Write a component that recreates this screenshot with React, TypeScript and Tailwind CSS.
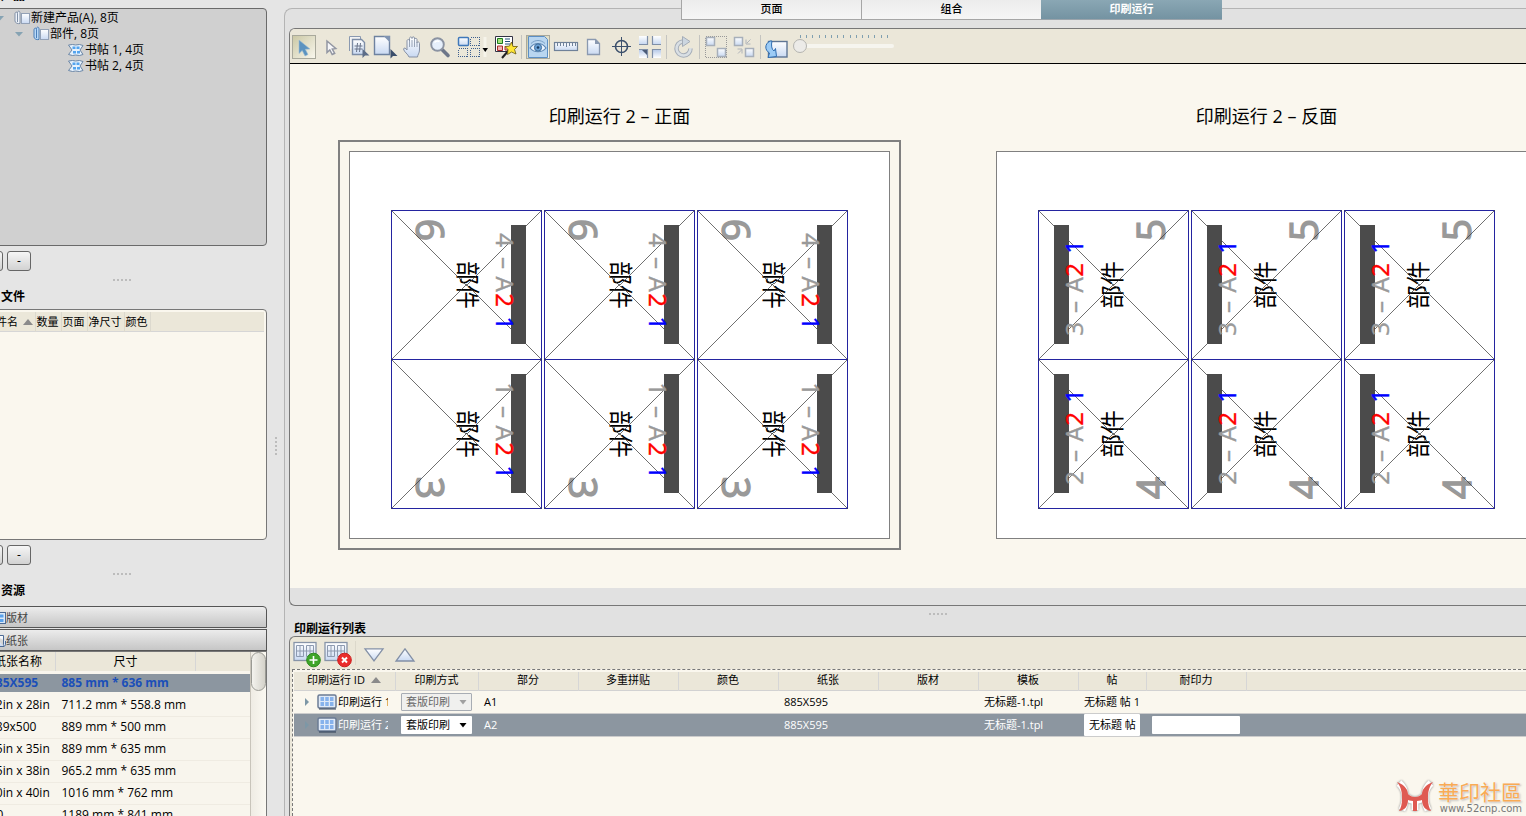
import { useState } from "react"
import type { ReactNode } from "react"

// Shared gradients for the toolbar icons
function IconDefs() {
  return (
    <svg width="0" height="0" className="absolute" aria-hidden="true">
      <defs>
        <linearGradient id="paper" x1="0" y1="0" x2="0" y2="1">
          <stop offset="0" stopColor="#ffffff" />
          <stop offset="1" stopColor="#c9d9f2" />
        </linearGradient>
        <linearGradient id="paperDown" x1="0" y1="0" x2="0" y2="1">
          <stop offset="0" stopColor="#b9cbe9" />
          <stop offset="1" stopColor="#ffffff" />
        </linearGradient>
      </defs>
    </svg>
  )
}

function Icon({ w = 24, h = 24, children }: { w?: number; h?: number; children: ReactNode }) {
  return (
    <svg width={w} height={h} viewBox={`0 0 ${w} ${h}`} fill="none" aria-hidden="true" className="block shrink-0 overflow-visible">
      {children}
    </svg>
  )
}

const ArrowIcon = () => (
  <Icon>
    <path d="M7 5v13.500l3.200-3 2.800 5.500 3-1.500-2.700-5.200 4.700-.3z" fill="#5b93c0" stroke="#9dbdd4" strokeWidth=".6" />
  </Icon>
)

const SmallArrowIcon = () => (
  <Icon>
    <path d="M8 6v11.500l2.800-2.500 2.400 4.500 2.500-1.200-2.400-4.300 3.500-.5z" fill="#f6f6f8" stroke="#9296a2" strokeWidth="1.500" />
  </Icon>
)

const NumberPagesIcon = () => (
  <Icon>
    <path d="M3.500 16V1.500h11V4" stroke="#8a99b0" fill="#f4f4f4" />
    <path d="M6.500 4.500h9l3 3v12h-12z" fill="url(#paper)" stroke="#7d8da6" strokeWidth="1.400" />
    <path d="M11.500 8l-1 9M14.500 8l-1 9M8.500 11h8M8.500 14h8" stroke="#6a758a" />
    <path d="M16.500 14v9l2.500-2.500h4.500z" fill="#5c6d88" />
  </Icon>
)

const PageArrowIcon = () => (
  <Icon>
    <path d="M1.500 1.500h15v18h-15z" fill="url(#paper)" stroke="#6e82a0" strokeWidth="1.400" />
    <path d="M10.500 1l6.500 6.500V1z" fill="#8094b2" />
    <path d="M17.500 14v9.500l2.500-2.500h4.500z" fill="#3a4e6b" />
  </Icon>
)

const HandIcon = () => (
  <Icon>
    <path
      d="M9 22c-1-3-5-5-5.500-8 .5-1.500 2-1.200 3.500 1V6c0-2 2.500-2 2.500 0V3.500c0-2 2.500-2 2.500 0V3c0-1.500 2.500-1.500 2.500 0v1.500c0-1.500 2.500-1.500 2.500 0V8c0-1.500 2.500-1.500 2.500.5V15c0 3-2 5-2 7z"
      fill="url(#paper)"
      stroke="#8791a4"
    />
    <path d="M9.500 6v6M12 5v7M14.500 5v7M17 7v5" stroke="#98a4b6" />
  </Icon>
)

const ZoomIcon = () => (
  <Icon>
    <path d="M15.500 15l5.500 5.500" stroke="#6d7689" strokeWidth="3.600" strokeLinecap="round" />
    <circle cx="10.500" cy="9.500" r="6.300" fill="#e6effb" stroke="#8b93a2" strokeWidth="1.900" />
    <path d="M7.500 7.500a4 4 0 0 1 5-1" stroke="#fff" strokeWidth="1.500" />
  </Icon>
)

const CellsIcon = () => (
  <Icon w={36}>
    <path
      d="M16.500 2.500h9v8h-9zM4.500 13.500h9v8h-9zM16.500 13.500h9v8h-9z"
      stroke="#3d5f8f"
      strokeDasharray="1 1"
      shapeRendering="crispEdges"
    />
    <rect x="4.500" y="2.500" width="10" height="8" rx="1" fill="url(#paper)" stroke="#3f78ba" strokeWidth="1.500" />
    <path d="M31 2v20" stroke="#f6f4ea" strokeWidth="3" />
    <path d="M28.500 13h5.500l-2.750 4z" fill="#000" />
  </Icon>
)

const WizardIcon = () => (
  <Icon>
    <path d="M2.500 1.500h17v15h-17z" fill="#fff" stroke="#334" />
    <path d="M4.500 3.500h5v5h-5z" fill="#a5e07c" stroke="#1c7a1c" />
    <path d="M12 4h5M12 6.500h5M12 9h5" stroke="#25527a" strokeWidth="1.200" />
    <path d="M4.500 11h5v4.500h-5zM12 11.500h4v3.500h-4z" fill="#f3b4b4" stroke="#a82a2a" />
    <path d="M9 23l7-8" stroke="#222" strokeWidth="2" />
    <path d="M18.500 7l1.500 4.500h4.500L21.500 14.500l1.500 4.500-4.500-2-4 2.500.5-5-3-3 4.500-.5z" fill="#ffe634" stroke="#6b5a10" strokeWidth=".8" />
  </Icon>
)

const EyeIcon = () => (
  <Icon>
    <path d="M2.500 1.500h16l3 3v18h-19z" fill="#b9d6f0" stroke="#5c8fc4" />
    <path d="M4 13c4-6 12-6 16 0-4 5-12 5-16 0z" fill="#eef6ff" stroke="#5f88b3" strokeWidth="1.200" />
    <circle cx="12" cy="12.500" r="3.600" fill="#6ba1d4" stroke="#3f6f9f" />
    <circle cx="12" cy="12.500" r="1.300" fill="#173a61" />
    <path d="M5 8.500c4-4 10-4 14 0" stroke="#7aa0c6" />
  </Icon>
)

const RulerIcon = () => (
  <Icon>
    <rect x=".5" y="7.500" width="23" height="8" fill="url(#paper)" stroke="#6f8199" strokeWidth="1.200" />
    <path d="M3.500 8v3M6.500 8v3M9.500 8v3M12.500 8v4M15.500 8v3M18.500 8v3M21.500 8v3" stroke="#6f8199" />
  </Icon>
)

const PageIcon = () => (
  <Icon>
    <path d="M5.500 4.500h8l4 4v11h-12z" fill="url(#paper)" stroke="#8a99b0" strokeWidth="1.300" />
    <path d="M13 4l5 5h-5z" fill="#8a99b0" />
  </Icon>
)

const TargetIcon = () => (
  <Icon>
    <circle cx="11.500" cy="11.500" r="6" stroke="#3c506c" strokeWidth="1.600" />
    <path d="M11.500 2v19M2 11.500h19" stroke="#3c506c" shapeRendering="crispEdges" />
  </Icon>
)

const CropMarksIcon = () => (
  <Icon>
    <path d="M1 1h8v8H1zM15 1h8v8h-8z" fill="url(#paper)" />
    <path d="M1 15h8v8H1zM15 15h8v8h-8z" fill="url(#paperDown)" />
    <path d="M1 9.500h8.500V1M14.500 1v8.500H23M1 14.500h8.500V23M14.500 23v-8.500H23" stroke="#7f8fa8" strokeWidth="1.200" />
    <path d="M4 15h5v5z" fill="#4b5c78" />
  </Icon>
)

const RotateIcon = () => (
  <Icon>
    <path d="M12 6.500a7 7 0 1 0 7.500 7" stroke="#a5adb8" strokeWidth="4.500" />
    <path d="M12 6.500a7 7 0 1 0 7.500 6.500" stroke="#d9dfe4" strokeWidth="2.500" />
    <path d="M11.500 1.500l7.500 5-7.500 5z" fill="#ccd6e0" stroke="#a5adb8" />
  </Icon>
)

const GroupIcon = () => (
  <Icon>
    <path d="M1.500 1.500h21v21h-21z" stroke="#999" strokeDasharray="1 1" shapeRendering="crispEdges" />
    <rect x="2.500" y="2.500" width="8" height="8" fill="url(#paper)" stroke="#a7afba" strokeWidth="1.500" />
    <rect x="13.500" y="13.500" width="8" height="8" fill="url(#paper)" stroke="#a7afba" strokeWidth="1.500" />
  </Icon>
)

const SwapIcon = () => (
  <Icon>
    <rect x="2.500" y="2.500" width="8" height="8" fill="url(#paper)" stroke="#a7afba" strokeWidth="1.500" />
    <rect x="13.500" y="13.500" width="8" height="8" fill="url(#paper)" stroke="#a7afba" strokeWidth="1.500" />
    <path d="M18.500 4.500l-3.500 3.500M14 4.500V9h4.500M6 18.500l3.500-3.500M10 18.500V14H5.500" stroke="#b0b4ba" />
  </Icon>
)

const FlipIcon = () => (
  <Icon>
    <rect x="3.500" y="6.500" width="18.500" height="15.500" fill="url(#paper)" stroke="#5f7594" strokeWidth="1.400" />
    <path d="M5 6c-5.500 3-5.500 9-.5 12l-1.500 4.500 8.500-1-1-8-1.500 2.500c-2.500-1.500-3-6-2-10z" fill="#9ccbf5" stroke="#2e6cb0" />
  </Icon>
)

const WorkIcon = () => (
  <Icon w={16} h={14}>
    <path d="M1 3c0-2.500 2.500-2.500 2.500 0v8M3.500 2c0-2.500 2.500-2.500 2.500 0v10.500C4 13 1 12 1 10V3" fill="#eef3fa" stroke="#8090a6" />
    <rect x="7.500" y="2.500" width="8" height="10" fill="url(#paper)" stroke="#93a1b6" />
  </Icon>
)

const PartIcon = () => (
  <Icon w={16} h={14}>
    <path d="M1 3c0-2.500 2.500-2.500 2.500 0v8M3.500 2c0-2.500 2.500-2.500 2.500 0v10.500C4 13 1 12 1 10V3" fill="#b9d9f7" stroke="#4b7fb8" />
    <rect x="7.500" y="2.500" width="8" height="10" fill="url(#paper)" stroke="#93a1b6" />
  </Icon>
)

const SignatureIcon = () => (
  <Icon w={16} h={14}>
    <path d="M.5 2l4 -.5 3 .5 4-.5 3.500 1L12 7l3 4.500-3.500 1-4-.5-3 .5-4-1L4 7z" fill="#e7f2fd" stroke="#6b86a6" />
    <path d="M4.500 3.500h3v2.500h-3zM8.500 3.500h3v2.500h-3zM5 8h3v2.500H5zM9 8h3v2.500H9z" fill="#54a4ee" />
  </Icon>
)

const RunIcon = () => (
  <Icon w={20} h={16}>
    <rect x="1" y="1" width="18" height="13" rx="1.500" fill="#dfe9f7" stroke="#6b7b94" strokeWidth="1.500" />
    <path d="M3.500 3h3.500v4H3.500zM8.250 3h3.500v4h-3.500zM13 3h3.500v4H13zM3.500 8h3.500v4H3.500zM8.250 8h3.500v4h-3.500zM13 8h3.500v4H13z" fill="#86b2ec" />
    <path d="M2 15h17" stroke="#2c3c55" strokeWidth="1" />
  </Icon>
)

const SheetBadgeIcon = ({ kind }: { kind: "add" | "remove" }) => (
  <Icon w={28} h={27}>
    <rect x="1" y="1.500" width="22" height="18" fill="url(#paper)" stroke="#8794a8" strokeWidth="1.300" />
    <path d="M3.500 4.500h7v11h-7zM13.500 4.500h7v11h-7zM7 4.500v11M17 4.500v11M3.500 10h17" stroke="#8d9ab0" />
    {kind === "add" ? (
      <>
        <circle cx="20.500" cy="19" r="6.800" fill="#3fa52a" stroke="#2b8a1c" />
        <path d="M20.500 15v8M16.500 19h8" stroke="#fff" strokeWidth="1.600" />
      </>
    ) : (
      <>
        <circle cx="20.500" cy="19" r="6.800" fill="#ea2c2c" stroke="#cc1c1c" />
        <path d="M18 16.500l5 5M23 16.500l-5 5" stroke="#fff" strokeWidth="2" />
      </>
    )}
  </Icon>
)

// Small pieces
function Grip() {
  return (
    <div className="flex gap-0.5">
      {[0, 1, 2, 3, 4].map((i) => (
        <span key={i} className="w-0.5 h-0.5 bg-[#bcbcbc]" />
      ))}
    </div>
  )
}

function PanelButtons() {
  const cls =
    "w-6 h-5 rounded-[3px] border border-[#666666] bg-gradient-to-b from-[#f6f6f6] to-[#d2d2d2] text-xs leading-4 text-black"
  return (
    <div className="flex gap-1 pt-[5px] pb-px -ml-[9px]">
      <button className={cls}>+</button>
      <button className={cls}>-</button>
    </div>
  )
}

// Left column
const paperSizes = [
  { name: "885X595", size: "885 mm * 636 mm" },
  { name: "22in x 28in", size: "711.2 mm * 558.8 mm" },
  { name: "889x500", size: "889 mm * 500 mm" },
  { name: "25in x 35in", size: "889 mm * 635 mm" },
  { name: "25in x 38in", size: "965.2 mm * 635 mm" },
  { name: "30in x 40in", size: "1016 mm * 762 mm" },
  { name: "A0", size: "1189 mm * 841 mm" },
]

function TreeArrow() {
  return (
    <Icon w={8} h={5}>
      <path d="M0 0h8L4 4.500z" fill="#86a3b3" />
    </Icon>
  )
}

function ProductTree() {
  return (
    <div className="h-[238px] bg-[#d0d0d0] border border-[#6a6a6a] rounded-r pt-px text-xs leading-4">
      <div className="flex items-center gap-px pl-[7px]">
        <TreeArrow />
        <span className="w-2" />
        <WorkIcon />
        新建产品(A), 8页
      </div>
      <div className="flex items-center gap-px pl-[26px]">
        <TreeArrow />
        <span className="w-2" />
        <PartIcon />
        部件, 8页
      </div>
      <div className="flex items-center gap-px pl-[79px]">
        <SignatureIcon />
        书帖 1, 4页
      </div>
      <div className="flex items-center gap-px pl-[79px]">
        <SignatureIcon />
        书帖 2, 4页
      </div>
    </div>
  )
}

function FileList() {
  const th = "border-r border-[#dcd9ce] px-px text-left font-normal"
  return (
    <div className="h-[231px] bg-[#faf7ee] border border-[#777777] rounded-r pt-0.5 pr-0.5">
      <table className="w-full table-fixed text-[11px] leading-[19px] bg-[#ebe7d9] border-b border-[#d6d6d6]">
        <thead>
          <tr>
            <th className="w-[46px] border-r border-[#dcd9ce] font-normal">
              <div className="flex items-center gap-[5px] -ml-1">
                <span className="whitespace-nowrap">文件名</span>
                <Icon w={10} h={6}>
                  <path d="M0 6h10L5 0z" fill="#8a8a8a" />
                </Icon>
              </div>
            </th>
            <th className={`${th} w-[26px]`}>数量</th>
            <th className={`${th} w-[26px]`}>页面</th>
            <th className={`${th} w-[37px]`}>净尺寸</th>
            <th className={`${th} w-[26px]`}>颜色</th>
            <th />
          </tr>
        </thead>
      </table>
    </div>
  )
}

function Resources() {
  const bar =
    "flex items-center w-full h-[22px] pl-1 pt-0.5 border border-[#555555] bg-gradient-to-b from-[#ececec] to-[#c6c6c6] text-[11px] text-[#444444]"
  return (
    <div className="flex-1 min-h-0 flex flex-col mt-[3px]">
      <button className={`${bar} rounded-tr mb-px`}>
        <Icon w={13} h={14}>
          <rect x=".5" y="1.500" width="12" height="11" fill="#dbe8f8" stroke="#4d6a94" />
          <path d="M2.500 3.500h3.500v3H2.500zM7 3.500h3.500v3H7zM2.500 8h3.500v3H2.500zM7 8h3.500v3H7z" fill="#5ba2ec" />
        </Icon>
        版材
      </button>
      <button className={bar}>
        <Icon w={13} h={14}>
          <path d="M1 1.500h9.500v9c0 2 2 2 2 0V7M1 1.500v11h10" fill="url(#paper)" stroke="#4d6a94" />
        </Icon>
        纸张
      </button>
      <div className="flex-1 min-h-0 flex overflow-hidden border-x border-t border-[#777777] bg-[#f8f5ed]">
        <table className="flex-1 table-fixed text-xs self-start">
          <thead>
            <tr className="h-5 bg-[#ebe7d9] border-b border-[#d6d6d6]">
              <th className="w-[66px] pl-[5px] text-left font-normal border-r border-[#d6d6d6]">纸张名称</th>
              <th className="w-[139px] font-normal border-r border-[#d6d6d6]">尺寸</th>
              <th className="w-[54px]" />
            </tr>
          </thead>
          <tbody>
            {paperSizes.map((p, i) => (
              <tr
                key={p.name}
                className={
                  i === 0
                    ? "h-[22px] bg-[#8c96a0] bg-clip-padding border-y-2 border-[#f8f5ed] font-bold text-[#1b4fb8]"
                    : "h-[22px] border-b border-[#efebe2]"
                }
              >
                <td className="whitespace-nowrap leading-4">{p.name}</td>
                <td className="pl-1.5 whitespace-nowrap leading-4">{p.size}</td>
                <td />
              </tr>
            ))}
          </tbody>
        </table>
        <div className="w-4 border-l border-[#c8c4ba] bg-gradient-to-r from-[#efece4] to-[#fbf9f2]">
          <div className="h-[39px] rounded-lg border border-[#9a9a94] bg-gradient-to-r from-[#f4f3ee] to-[#d4d2ca]" />
        </div>
      </div>
    </div>
  )
}

function Sidebar() {
  return (
    <aside className="w-[279px] shrink-0 -ml-3 -mt-4 flex flex-col">
      <h2 className="h-6 pl-[13px] text-xs leading-6 font-bold">产品</h2>
      <ProductTree />
      <PanelButtons />
      <div className="h-[13px] flex justify-center items-end pr-3 pb-1">
        <Grip />
      </div>
      <h2 className="h-6 pl-[13px] text-xs leading-6 font-bold">文件</h2>
      <FileList />
      <PanelButtons />
      <div className="h-[13px] flex justify-center items-end pr-3 pb-1">
        <Grip />
      </div>
      <h2 className="h-6 pl-[13px] text-xs leading-6 font-bold">资源</h2>
      <Resources />
    </aside>
  )
}

// Main toolbar
function Tool({ label, active, children }: { label: string; active?: boolean; children: ReactNode }) {
  return (
    <button
      aria-label={label}
      className={
        active
          ? "h-6 bg-gradient-to-br from-[#c9c6a2] to-[#fbf9f0] outline outline-1 -outline-offset-1 outline-[#a9a99c]"
          : "h-6"
      }
    >
      {children}
    </button>
  )
}

const Separator = () => <span className="w-px h-6 bg-[#c4c4c0]" />

function Toolbar() {
  const [zoom, setZoom] = useState(0)

  return (
    <div className="h-[35px] shrink-0 flex items-start gap-1 pt-1.5 pl-0.5 bg-[#ebe7d9] border-b border-black">
      <div className="flex gap-[3px]">
        <Tool label="选择" active><ArrowIcon /></Tool>
        <Tool label="直接选择"><SmallArrowIcon /></Tool>
        <Tool label="页码"><NumberPagesIcon /></Tool>
        <Tool label="页面选择"><PageArrowIcon /></Tool>
        <Tool label="抓手"><HandIcon /></Tool>
        <Tool label="缩放"><ZoomIcon /></Tool>
        <Tool label="排列"><CellsIcon /></Tool>
        <Tool label="向导"><WizardIcon /></Tool>
      </div>
      <Separator />
      <Tool label="预览" active><EyeIcon /></Tool>
      <Tool label="标尺"><RulerIcon /></Tool>
      <Tool label="页面"><PageIcon /></Tool>
      <Tool label="定位"><TargetIcon /></Tool>
      <Tool label="裁切标记"><CropMarksIcon /></Tool>
      <Separator />
      <Tool label="旋转"><RotateIcon /></Tool>
      <Separator />
      <Tool label="组合"><GroupIcon /></Tool>
      <Tool label="交换"><SwapIcon /></Tool>
      <Separator />
      <Tool label="翻转"><FlipIcon /></Tool>
      <div className="w-[101px]">
        <div className="flex justify-between pl-[7px] pr-1.5 h-1">
          {Array.from({ length: 15 }, (_, i) => (
            <span key={i} className="w-px h-[3px] bg-[#7f9fb0]" />
          ))}
        </div>
        <input
          type="range"
          aria-label="显示比例"
          value={zoom}
          onChange={(e) => setZoom(Number(e.target.value))}
          className="block w-full h-3.5 appearance-none bg-transparent [&::-webkit-slider-runnable-track]:h-1 [&::-webkit-slider-runnable-track]:rounded [&::-webkit-slider-runnable-track]:bg-[#f6f5ef] [&::-webkit-slider-thumb]:appearance-none [&::-webkit-slider-thumb]:w-3.5 [&::-webkit-slider-thumb]:h-3.5 [&::-webkit-slider-thumb]:-mt-[5px] [&::-webkit-slider-thumb]:rounded-full [&::-webkit-slider-thumb]:border [&::-webkit-slider-thumb]:border-[#b4b4b0] [&::-webkit-slider-thumb]:bg-[#ecebe8]"
        />
      </div>
    </div>
  )
}

// One page of the imposition; the marks are [text, centre, colour] along the spine
type Mark = [string, number, string]

function ImposedPage({ side, page, pageAt, marks }: { side: "front" | "back"; page: string; pageAt: number; marks: Mark[] }) {
  const front = side === "front"
  const turn = front ? 90 : -90
  const barX = front ? 120 : 16
  const markX = front ? 105 : 45

  return (
    <svg width="151" height="150" viewBox="0 0 151 150" className="block" textAnchor="middle">
      <path d="M.5 .5h150v149H.5z" fill="none" stroke="#2424a0" />
      <text
        transform={`translate(${front ? 25 : 127} ${pageAt}) rotate(${turn})`}
        fontSize="39"
        fill="#999999"
        stroke="#999999"
        strokeWidth="1.400"
      >
        {page}
      </text>
      <text transform={`translate(${front ? 68 : 83} 75) rotate(${turn})`} fontSize="24" fill="#000000">
        部件
      </text>
      <path d="M0 0L151 150M151 0L0 150" stroke="#333333" strokeWidth=".7" shapeRendering="crispEdges" />
      <rect x={barX} y="15" width="15" height="119" fill="#4b4b4b" />
      {marks.map(([text, at, color]) => (
        <text
          key={at}
          transform={`translate(${markX} ${at}) rotate(${turn})`}
          fontSize="24"
          fill={color}
          stroke={color}
          strokeWidth=".4"
        >
          {text}
        </text>
      ))}
    </svg>
  )
}

const frontRows: { page: string; pageAt: number; marks: Mark[] }[] = [
  { page: "6", pageAt: 20, marks: [["4", 30, "#999999"], ["–", 53, "#999999"], ["A", 74, "#999999"], ["2", 90, "#ff0000"], ["1", 113, "#0000ff"]] },
  { page: "3", pageAt: 129, marks: [["1", 30, "#999999"], ["–", 53, "#999999"], ["A", 74, "#999999"], ["2", 90, "#ff0000"], ["1", 113, "#0000ff"]] },
]

const backRows: { page: string; pageAt: number; marks: Mark[] }[] = [
  { page: "5", pageAt: 20, marks: [["1", 37, "#0000ff"], ["2", 60, "#ff0000"], ["A", 75, "#999999"], ["–", 97, "#999999"], ["3", 119, "#999999"]] },
  { page: "4", pageAt: 129, marks: [["1", 37, "#0000ff"], ["2", 60, "#ff0000"], ["A", 75, "#999999"], ["–", 97, "#999999"], ["2", 119, "#999999"]] },
]

function Sheet({ title, side, selected }: { title: string; side: "front" | "back"; selected?: boolean }) {
  const rows = side === "front" ? frontRows : backRows
  return (
    <div className="shrink-0">
      <h3 className="h-6 mb-3 text-center text-lg leading-6">{title}</h3>
      <div className={selected ? "border-2 border-[#808080] p-[9px]" : "border-2 border-transparent p-[9px]"}>
        <div className="border border-[#808080] bg-white pt-[58px] pb-[30px] px-[41px]">
          {rows.map((row) => (
            <div key={row.page} className="flex gap-0.5 -mb-px">
              {[0, 1, 2].map((i) => (
                <ImposedPage key={i} side={side} page={row.page} pageAt={row.pageAt} marks={row.marks} />
              ))}
            </div>
          ))}
        </div>
      </div>
    </div>
  )
}

// Press run list
const columns = [
  { label: "印刷方式", width: "w-[83px]" },
  { label: "部分", width: "w-[100px]" },
  { label: "多重拼贴", width: "w-[100px]" },
  { label: "颜色", width: "w-[100px]" },
  { label: "纸张", width: "w-[100px]" },
  { label: "版材", width: "w-[100px]" },
  { label: "模板", width: "w-[100px]" },
  { label: "帖", width: "w-[68px]" },
  { label: "耐印力", width: "w-[100px]" },
]

const runs = [
  { id: "印刷运行 1", part: "A1", paper: "885X595", template: "无标题-1.tpl", signature: "无标题 帖 1", selected: false },
  { id: "印刷运行 2", part: "A2", paper: "885X595", template: "无标题-1.tpl", signature: "无标题 帖", selected: true },
]

function RunTable() {
  return (
    <table className="w-full table-fixed text-[11px]">
      <thead>
        <tr className="h-[18px] bg-[#ebe7d9] border-b border-[#d2d2d2]">
          <th className="w-[101px] pb-0.5 border-r border-[#d6d6d6] font-normal leading-4">
            <div className="flex items-center gap-1.5 pl-[13px]">
              印刷运行 ID
              <Icon w={10} h={6}>
                <path d="M0 6h10L5 0z" fill="#8a8a8a" />
              </Icon>
            </div>
          </th>
          {columns.map((c) => (
            <th key={c.label} className={`${c.width} pb-0.5 border-r border-[#d6d6d6] font-normal leading-4`}>
              {c.label}
            </th>
          ))}
          <th />
        </tr>
      </thead>
      <tbody>
        {runs.map((run) => (
          <tr
            key={run.id}
            className={run.selected ? "h-[23px] border-b border-[#cccccc] bg-[#8c96a0] text-white" : "h-[23px] border-b border-[#cccccc]"}
          >
            <td>
              <div className="flex items-center pl-[11px]">
                <Icon w={12} h={8}>
                  <path d="M0 0v8l4-4z" fill="#7d97a6" />
                </Icon>
                <RunIcon />
                <span className="w-[51px] pl-px overflow-hidden whitespace-nowrap leading-4">{run.id}</span>
              </div>
            </td>
            <td className="pl-1.5">
              <div className="relative w-[71px]">
                <select
                  aria-label="印刷方式"
                  disabled={!run.selected}
                  className={
                    run.selected
                      ? "block w-full h-[18px] pl-[5px] appearance-none rounded-[1px] bg-white text-black leading-4"
                      : "block w-full h-[18px] pl-1 appearance-none rounded-[1px] border border-[#a8adb4] bg-[#f0f0ee] text-[#666666] opacity-100 leading-4"
                  }
                >
                  <option>套版印刷</option>
                </select>
                <span className="absolute right-[5px] top-[7px] pointer-events-none">
                  <Icon w={8} h={5}>
                    <path d="M.5 0h7L4 4.500z" fill={run.selected ? "#000000" : "#a0a0a0"} />
                  </Icon>
                </span>
              </div>
            </td>
            <td className="pl-1.5">{run.part}</td>
            <td />
            <td />
            <td className="pl-1.5">{run.paper}</td>
            <td />
            <td className="pl-1.5 whitespace-nowrap">{run.template}</td>
            <td className="pl-1.5 whitespace-nowrap">
              {run.selected ? (
                <input
                  aria-label="帖"
                  defaultValue={run.signature}
                  className="block w-14 h-[22px] pl-[5px] pb-[3px] rounded-[1px] bg-white text-black"
                />
              ) : (
                run.signature
              )}
            </td>
            <td className="pl-1.5">
              {run.selected && <input aria-label="耐印力" className="block w-[88px] h-[18px] rounded-[1px] bg-white text-black" />}
            </td>
            <td />
          </tr>
        ))}
      </tbody>
    </table>
  )
}

function RunList() {
  return (
    <section className="flex-1 min-h-0 flex flex-col border-t border-l border-[#777777] rounded-tl-md bg-[#ebe7d9] overflow-hidden">
      <div className="h-8 shrink-0 flex items-start gap-[3px] pt-1 pl-[3px]">
        <button aria-label="添加印刷运行"><SheetBadgeIcon kind="add" /></button>
        <button aria-label="删除印刷运行"><SheetBadgeIcon kind="remove" /></button>
        <span className="w-px h-6 mr-[5px] bg-[#dcd8cb]" />
        <button aria-label="下移" className="mt-[7px]">
          <Icon w={20} h={14}>
            <path d="M1 .8h18L10 13z" fill="url(#paper)" stroke="#8390a6" strokeWidth="1.300" />
          </Icon>
        </button>
        <button aria-label="上移" className="mt-[7px] ml-2">
          <Icon w={20} h={14}>
            <path d="M1 13h18L10 .8z" fill="url(#paper)" stroke="#8390a6" strokeWidth="1.300" />
          </Icon>
        </button>
      </div>
      <div className="flex-1 ml-0.5 pt-0.5 pl-px border-t border-l border-dashed border-[#777777] bg-[#faf7ee]">
        <RunTable />
      </div>
    </section>
  )
}

function Tabs() {
  const [tab, setTab] = useState("印刷运行")
  return (
    <nav className="relative z-10 flex h-5 -mt-[9px] ml-[392px]">
      {["页面", "组合", "印刷运行"].map((name) => (
        <button
          key={name}
          onClick={() => setTab(name)}
          className={
            tab === name
              ? "w-[181px] border-b border-[#9aa4ab] bg-gradient-to-b from-[#8aa7b4] to-[#7493a2] text-[11px] font-bold text-white"
              : "w-[180px] border-l border-b border-[#a6a6a6] bg-gradient-to-b from-[#ececec] to-[#f6f6f6] text-[11px] font-medium text-black"
          }
        >
          {name}
        </button>
      ))}
    </nav>
  )
}

function Watermark() {
  return (
    <div className="absolute right-1 bottom-0.5 flex items-center gap-1">
      <svg width="38" height="34" viewBox="0 0 38 34" fill="none" aria-hidden="true" className="drop-shadow-[0_0_1px_#888888]">
        <g stroke="#ffffff" strokeWidth="7" strokeLinejoin="round">
          <path d="M3 3C10 9 11 20 6 30M35 3C28 9 27 20 32 30M9 16c7 6 13 6 20 0M19 22v8" />
        </g>
        <path d="M1 2c8 3 11 8 11 12 4 4 10 4 14 0 0-4 3-9 11-12-5 6-5 12-5 17 0 5 1 9 3 12-6-1-9-5-9-11-4 1.500-10 1.500-14 0 0 6-3 10-9 11 2-3 3-7 3-12 0-5 0-11-5-17z" fill="#df5a52" />
        <path d="M17 21h4v10h-4z" fill="#df5a52" />
      </svg>
      <div className="text-right">
        <div className="text-[21px] leading-6 text-[#f9ab55] [text-shadow:0_0_2px_#ffffff,1px_1px_2px_#aaaaaa]">華印社區</div>
        <div className="font-['DejaVu_Sans'] text-[10px] leading-[10px] text-[#777777]">www.52cnp.com</div>
      </div>
    </div>
  )
}

export default function App() {
  return (
    <div className="relative h-screen overflow-hidden flex bg-[#e5e5e5] text-black font-['Open_Sans','Noto_Sans_CJK_SC',sans-serif]">
      <IconDefs />
      <Sidebar />
      <div className="w-[17px] shrink-0 flex items-center justify-center pt-[76px]">
        <div className="flex flex-col gap-0.5">
          {[0, 1, 2, 3, 4].map((i) => (
            <span key={i} className="w-0.5 h-0.5 bg-[#bcbcbc]" />
          ))}
        </div>
      </div>
      <main className="flex-1 min-w-0 mt-2 flex flex-col border-t border-l border-[#b4b4b4] rounded-tl-lg bg-[#e1e1e1] pl-1">
        <Tabs />
        <section className="h-[578px] shrink-0 mt-2 flex flex-col border-y border-l border-[#777777] rounded-l-md overflow-hidden">
          <Toolbar />
          <div className="h-[524px] shrink-0 flex gap-[84px] pt-10 pl-12 bg-[#faf7ee] overflow-hidden">
            <Sheet title="印刷运行 2 – 正面" side="front" selected />
            <Sheet title="印刷运行 2 – 反面" side="back" />
          </div>
        </section>
        <div className="h-4 shrink-0 flex items-center justify-center pl-[60px]">
          <Grip />
        </div>
        <h2 className="h-3.5 shrink-0 pl-[5px] text-xs leading-3.5 font-bold">印刷运行列表</h2>
        <RunList />
      </main>
      <Watermark />
    </div>
  )
}
